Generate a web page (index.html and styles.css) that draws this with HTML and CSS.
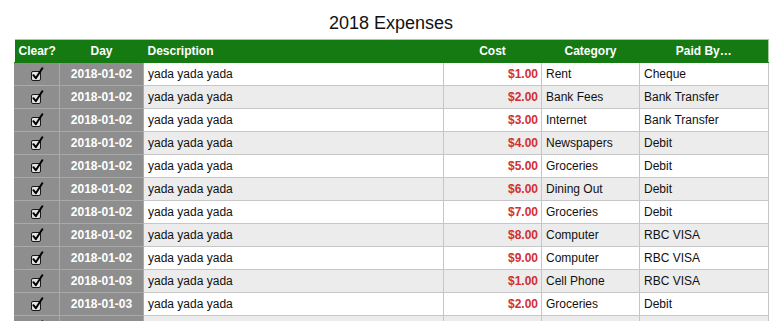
FILE: index.html
```html
<!DOCTYPE html>
<html>
<head>
<meta charset="utf-8">
<link rel="stylesheet" href="styles.css">
</head>
<body>
<div class="page">
  <h1 class="title">2018 Expenses</h1>
  <table class="expenses">
    <colgroup>
      <col class="c-clear"><col class="c-day"><col class="c-desc"><col class="c-cost"><col class="c-cat"><col class="c-paid">
    </colgroup>
    <thead>
      <tr><th>Clear?</th><th>Day</th><th class="left">Description</th><th>Cost</th><th>Category</th><th>Paid By…</th></tr>
    </thead>
    <tbody>
      <tr><td class="chk"><svg class="cb" viewBox="0 0 14 14" width="14" height="14"><rect x="1.5" y="4.5" width="9" height="9" rx="1.5" fill="#e4e4e4" stroke="#1a1a1a" stroke-width="1"/><path d="M3.4 8.2 L5.8 11.2 L12.3 1.3" fill="none" stroke="#000" stroke-width="2" stroke-linecap="round" stroke-linejoin="round"/></svg></td><td class="day">2018-01-02</td><td>yada yada yada</td><td class="cost">$1.00</td><td>Rent</td><td>Cheque</td></tr>
      <tr><td class="chk"><svg class="cb" viewBox="0 0 14 14" width="14" height="14"><rect x="1.5" y="4.5" width="9" height="9" rx="1.5" fill="#e4e4e4" stroke="#1a1a1a" stroke-width="1"/><path d="M3.4 8.2 L5.8 11.2 L12.3 1.3" fill="none" stroke="#000" stroke-width="2" stroke-linecap="round" stroke-linejoin="round"/></svg></td><td class="day">2018-01-02</td><td>yada yada yada</td><td class="cost">$2.00</td><td>Bank Fees</td><td>Bank Transfer</td></tr>
      <tr><td class="chk"><svg class="cb" viewBox="0 0 14 14" width="14" height="14"><rect x="1.5" y="4.5" width="9" height="9" rx="1.5" fill="#e4e4e4" stroke="#1a1a1a" stroke-width="1"/><path d="M3.4 8.2 L5.8 11.2 L12.3 1.3" fill="none" stroke="#000" stroke-width="2" stroke-linecap="round" stroke-linejoin="round"/></svg></td><td class="day">2018-01-02</td><td>yada yada yada</td><td class="cost">$3.00</td><td>Internet</td><td>Bank Transfer</td></tr>
      <tr><td class="chk"><svg class="cb" viewBox="0 0 14 14" width="14" height="14"><rect x="1.5" y="4.5" width="9" height="9" rx="1.5" fill="#e4e4e4" stroke="#1a1a1a" stroke-width="1"/><path d="M3.4 8.2 L5.8 11.2 L12.3 1.3" fill="none" stroke="#000" stroke-width="2" stroke-linecap="round" stroke-linejoin="round"/></svg></td><td class="day">2018-01-02</td><td>yada yada yada</td><td class="cost">$4.00</td><td>Newspapers</td><td>Debit</td></tr>
      <tr><td class="chk"><svg class="cb" viewBox="0 0 14 14" width="14" height="14"><rect x="1.5" y="4.5" width="9" height="9" rx="1.5" fill="#e4e4e4" stroke="#1a1a1a" stroke-width="1"/><path d="M3.4 8.2 L5.8 11.2 L12.3 1.3" fill="none" stroke="#000" stroke-width="2" stroke-linecap="round" stroke-linejoin="round"/></svg></td><td class="day">2018-01-02</td><td>yada yada yada</td><td class="cost">$5.00</td><td>Groceries</td><td>Debit</td></tr>
      <tr><td class="chk"><svg class="cb" viewBox="0 0 14 14" width="14" height="14"><rect x="1.5" y="4.5" width="9" height="9" rx="1.5" fill="#e4e4e4" stroke="#1a1a1a" stroke-width="1"/><path d="M3.4 8.2 L5.8 11.2 L12.3 1.3" fill="none" stroke="#000" stroke-width="2" stroke-linecap="round" stroke-linejoin="round"/></svg></td><td class="day">2018-01-02</td><td>yada yada yada</td><td class="cost">$6.00</td><td>Dining Out</td><td>Debit</td></tr>
      <tr><td class="chk"><svg class="cb" viewBox="0 0 14 14" width="14" height="14"><rect x="1.5" y="4.5" width="9" height="9" rx="1.5" fill="#e4e4e4" stroke="#1a1a1a" stroke-width="1"/><path d="M3.4 8.2 L5.8 11.2 L12.3 1.3" fill="none" stroke="#000" stroke-width="2" stroke-linecap="round" stroke-linejoin="round"/></svg></td><td class="day">2018-01-02</td><td>yada yada yada</td><td class="cost">$7.00</td><td>Groceries</td><td>Debit</td></tr>
      <tr><td class="chk"><svg class="cb" viewBox="0 0 14 14" width="14" height="14"><rect x="1.5" y="4.5" width="9" height="9" rx="1.5" fill="#e4e4e4" stroke="#1a1a1a" stroke-width="1"/><path d="M3.4 8.2 L5.8 11.2 L12.3 1.3" fill="none" stroke="#000" stroke-width="2" stroke-linecap="round" stroke-linejoin="round"/></svg></td><td class="day">2018-01-02</td><td>yada yada yada</td><td class="cost">$8.00</td><td>Computer</td><td>RBC VISA</td></tr>
      <tr><td class="chk"><svg class="cb" viewBox="0 0 14 14" width="14" height="14"><rect x="1.5" y="4.5" width="9" height="9" rx="1.5" fill="#e4e4e4" stroke="#1a1a1a" stroke-width="1"/><path d="M3.4 8.2 L5.8 11.2 L12.3 1.3" fill="none" stroke="#000" stroke-width="2" stroke-linecap="round" stroke-linejoin="round"/></svg></td><td class="day">2018-01-02</td><td>yada yada yada</td><td class="cost">$9.00</td><td>Computer</td><td>RBC VISA</td></tr>
      <tr><td class="chk"><svg class="cb" viewBox="0 0 14 14" width="14" height="14"><rect x="1.5" y="4.5" width="9" height="9" rx="1.5" fill="#e4e4e4" stroke="#1a1a1a" stroke-width="1"/><path d="M3.4 8.2 L5.8 11.2 L12.3 1.3" fill="none" stroke="#000" stroke-width="2" stroke-linecap="round" stroke-linejoin="round"/></svg></td><td class="day">2018-01-03</td><td>yada yada yada</td><td class="cost">$1.00</td><td>Cell Phone</td><td>RBC VISA</td></tr>
      <tr><td class="chk"><svg class="cb" viewBox="0 0 14 14" width="14" height="14"><rect x="1.5" y="4.5" width="9" height="9" rx="1.5" fill="#e4e4e4" stroke="#1a1a1a" stroke-width="1"/><path d="M3.4 8.2 L5.8 11.2 L12.3 1.3" fill="none" stroke="#000" stroke-width="2" stroke-linecap="round" stroke-linejoin="round"/></svg></td><td class="day">2018-01-03</td><td>yada yada yada</td><td class="cost">$2.00</td><td>Groceries</td><td>Debit</td></tr>
      <tr><td class="chk"><svg class="cb" viewBox="0 0 14 14" width="14" height="14"><rect x="1.5" y="4.5" width="9" height="9" rx="1.5" fill="#e4e4e4" stroke="#1a1a1a" stroke-width="1"/><path d="M3.4 8.2 L5.8 11.2 L12.3 1.3" fill="none" stroke="#000" stroke-width="2" stroke-linecap="round" stroke-linejoin="round"/></svg></td><td class="day"></td><td></td><td class="cost"></td><td></td><td></td></tr>
    </tbody>
  </table>
</div>
</body>
</html>
```

FILE: styles.css
```css
html, body {
  margin: 0;
  padding: 0;
  background: #ffffff;
  overflow: hidden;
}
body {
  font-family: "Liberation Sans", Arial, Helvetica, sans-serif;
  color: #111;
}
.page {
  padding: 0 10px 0 14px;
}
.title {
  margin: 0;
  padding: 13px 0 6px;
  font-size: 18px;
  line-height: 20px;
  font-weight: normal;
  text-align: center;
  color: #111;
}
.expenses {
  width: 754px;
  table-layout: fixed;
  border-collapse: collapse;
  font-size: 12px;
}
.c-clear { width: 45px; }
.c-day { width: 84px; }
.c-desc { width: 300px; }
.c-cost { width: 98px; }
.c-cat { width: 98px; }
.c-paid { width: 129px; }

.expenses th {
  background: #157a12;
  color: #ffffff;
  font-weight: bold;
  line-height: 14px;
  padding: 4px 4px;
  text-align: center;
  white-space: nowrap;
  border-top: 1px solid #a6cba6;
  border-bottom: 1px solid #157a12;
}
.expenses th:last-child {
  border-right: 1px solid #a6cba6;
}
.expenses th.left {
  text-align: left;
}
.expenses td {
  height: 14px;
  line-height: 14px;
  padding: 4px 4px;
  border: 1px solid #c6c6c6;
  white-space: nowrap;
  overflow: hidden;
  background: #ffffff;
  color: #111;
}
.expenses tbody tr:nth-child(even) td {
  background: #ececec;
}
.expenses td.chk,
.expenses tbody tr:nth-child(even) td.chk {
  background: #8e8e8e;
  text-align: center;
  border-color: #a9a9a9;
  border-left-color: #8e8e8e;
}
.expenses td.day,
.expenses tbody tr:nth-child(even) td.day {
  background: #8e8e8e;
  color: #ffffff;
  font-weight: bold;
  text-align: center;
  border-color: #a9a9a9;
}
.expenses td.cost {
  color: #d23030;
  font-weight: bold;
  text-align: right;
  padding-right: 3px;
}
.cb {
  display: inline-block;
  vertical-align: top;
}
```
